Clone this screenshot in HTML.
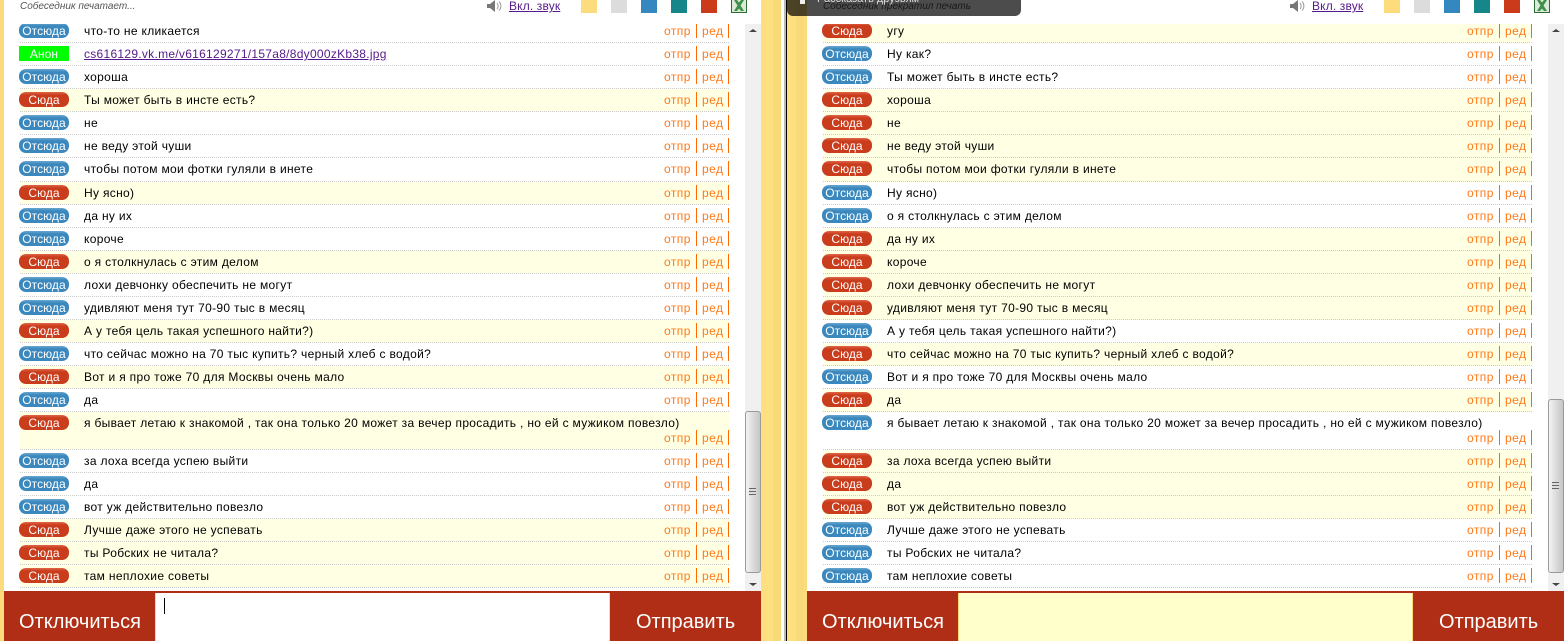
<!DOCTYPE html>
<html lang="ru">
<head>
<meta charset="utf-8">
<title>Чат</title>
<style>
html,body{margin:0;padding:0;width:1564px;height:641px;overflow:hidden;background:#fff}
body{position:relative;font-family:"Liberation Sans",sans-serif;font-size:12px;letter-spacing:.32px;color:#000}
.panel{position:absolute;top:0;left:0;width:761px;height:641px;background:#fff;overflow:hidden}
.panel.b{left:803px}
.edge{position:absolute;left:0;top:0;width:4px;height:641px;background:#fbdb7b}
.status{position:absolute;left:20px;top:1px;font-style:italic;font-size:10px;line-height:12px;color:#555;letter-spacing:0}
.spk{position:absolute;left:487px;top:0}
.snd{position:absolute;left:509px;top:0;line-height:12px;color:#551a8b;text-decoration:underline;font-size:12px;letter-spacing:.15px}
.sw{position:absolute;top:0;width:16px;height:13px}
.xl{position:absolute;left:731px;top:0}
.list{position:absolute;left:0;top:24px;width:745px;height:567px;overflow:hidden}
.in{margin-top:-4px}
.r{position:relative;margin-left:20px;width:709px;height:22px;border-bottom:1px dotted #ccc;background:#fff}
.r.y{background:#ffffe3}
.r.t{height:37px}
.r.x{height:23px}
.tag{position:absolute;left:-1px;top:3px;width:50px;height:15px;line-height:16px;border-radius:7px;text-align:center;color:#fff;font-size:12px;letter-spacing:.05px;background:linear-gradient(#6aa6cf 0,#3a88bd 3px,#3a88bd 100%)}
.tag.s{background:linear-gradient(#e0664a 0,#c93c1c 3px,#c93c1c 100%)}
.tag.g{background:#0f0;border-radius:0}
.m{position:absolute;left:64px;top:0;line-height:22px;white-space:nowrap}
.m a{color:#551a8b;text-decoration:underline;letter-spacing:.28px}
.o{position:absolute;top:0;line-height:22px;color:#ff7a1a;white-space:nowrap;letter-spacing:.45px}
.o1{left:644px}.o2{left:682px}
.l{position:absolute;top:3px;width:1px;height:15px;background:#ff6a00}
.l1{left:676px}.l2{left:708px}
.t .o{top:15px}
.t .l{top:18px}
.bar{position:absolute;left:745px;top:24px;width:16px;height:567px;background:#f0f0f0}
.up,.dn{position:absolute;left:4px;width:0;height:0;border-left:4px solid transparent;border-right:4px solid transparent}
.up{top:5px;border-bottom:3px solid #444}
.dn{bottom:5px;border-top:3px solid #444}
.th{position:absolute;left:0;width:14px;box-sizing:content-box;border:1px solid #9a9a9a;border-radius:3px;background:linear-gradient(90deg,#f4f4f4,#dedede 45%,#c6c6c6)}
.gr{position:absolute;left:3px;width:7px;height:8px;background:repeating-linear-gradient(#666 0,#666 1px,#ddd 1px,#ddd 3px)}
.foot{position:absolute;left:4px;top:591px;width:757px;height:50px;background:#b02e15}
.btn{position:absolute;top:18px;line-height:26px;color:#fff;font-family:"Liberation Sans",sans-serif;font-size:20px;letter-spacing:0;white-space:nowrap}
.inp{position:absolute;left:151px;top:2px;width:453px;height:48px;background:#fff;border-left:1px solid #fbdb7b;border-right:1px solid #fbdb7b}
.b .inp{background:#ffffcc}
.caret{position:absolute;left:8px;top:5px;width:1px;height:16px;background:#000}
.stripe{position:absolute;top:0;height:641px}
.toast{position:absolute;left:787px;top:0;width:234px;height:16px;background:rgba(0,0,0,.7);border-radius:0 0 6px 6px;overflow:hidden;color:#ddd}
.toast span{position:absolute;left:30px;top:-7px;line-height:12px;font-size:11px;letter-spacing:0;white-space:nowrap}
.toast i{position:absolute;left:13px;top:0;width:5px;height:4px;background:#eee}
</style>
</head>
<body>

<div class="panel a">
<div class="edge"></div>
<div class="status">Собеседник печатает...</div>
<svg class="spk" width="16" height="12" viewBox="0 0 16 12"><path d="M0 4h3l5-4v12L3 8H0z" fill="#777"/><path d="M10 3c1.500 1.500 1.500 4.500 0 6M12 1.500c2.500 2.500 2.500 6.500 0 9" fill="none" stroke="#999" stroke-width="1"/></svg>
<div class="snd">Вкл. звук</div>
<div class="sw" style="left:581px;background:#fcdc7c"></div>
<div class="sw" style="left:611px;background:#dcdcdc"></div>
<div class="sw" style="left:641px;background:#3587bf"></div>
<div class="sw" style="left:671px;background:#16868a"></div>
<div class="sw" style="left:701px;background:#cb3a1a"></div>
<svg class="xl" width="16" height="13" viewBox="0 0 16 13"><rect x=".5" y="-1" width="15" height="13.500" fill="#dbe9d8" stroke="#2f6b35"/><path d="M3 0h3l2 2.500L10 0h3L9.500 5.500 13 11h-3L8 8.500 6 11H3L6.500 5.500z" fill="#3d8f4a"/></svg>
<div class="list"><div class="in">
<div class="r"><div class="tag">Отсюда</div><div class="m">что-то не кликается</div><div class="o o1">отпр</div><div class="l l1"></div><div class="o o2">ред</div><div class="l l2"></div></div>
<div class="r"><div class="tag g">Анон</div><div class="m"><a>cs616129.vk.me/v616129271/157a8/8dy000zKb38.jpg</a></div><div class="o o1">отпр</div><div class="l l1"></div><div class="o o2">ред</div><div class="l l2"></div></div>
<div class="r"><div class="tag">Отсюда</div><div class="m">хороша</div><div class="o o1">отпр</div><div class="l l1"></div><div class="o o2">ред</div><div class="l l2"></div></div>
<div class="r y"><div class="tag s">Сюда</div><div class="m">Ты может быть в инсте есть?</div><div class="o o1">отпр</div><div class="l l1"></div><div class="o o2">ред</div><div class="l l2"></div></div>
<div class="r"><div class="tag">Отсюда</div><div class="m">не</div><div class="o o1">отпр</div><div class="l l1"></div><div class="o o2">ред</div><div class="l l2"></div></div>
<div class="r"><div class="tag">Отсюда</div><div class="m">не веду этой чуши</div><div class="o o1">отпр</div><div class="l l1"></div><div class="o o2">ред</div><div class="l l2"></div></div>
<div class="r x"><div class="tag">Отсюда</div><div class="m">чтобы потом мои фотки гуляли в инете</div><div class="o o1">отпр</div><div class="l l1"></div><div class="o o2">ред</div><div class="l l2"></div></div>
<div class="r y"><div class="tag s">Сюда</div><div class="m">Ну ясно)</div><div class="o o1">отпр</div><div class="l l1"></div><div class="o o2">ред</div><div class="l l2"></div></div>
<div class="r"><div class="tag">Отсюда</div><div class="m">да ну их</div><div class="o o1">отпр</div><div class="l l1"></div><div class="o o2">ред</div><div class="l l2"></div></div>
<div class="r"><div class="tag">Отсюда</div><div class="m">короче</div><div class="o o1">отпр</div><div class="l l1"></div><div class="o o2">ред</div><div class="l l2"></div></div>
<div class="r y"><div class="tag s">Сюда</div><div class="m">о я столкнулась с этим делом</div><div class="o o1">отпр</div><div class="l l1"></div><div class="o o2">ред</div><div class="l l2"></div></div>
<div class="r"><div class="tag">Отсюда</div><div class="m">лохи девчонку обеспечить не могут</div><div class="o o1">отпр</div><div class="l l1"></div><div class="o o2">ред</div><div class="l l2"></div></div>
<div class="r"><div class="tag">Отсюда</div><div class="m">удивляют меня тут 70-90 тыс в месяц</div><div class="o o1">отпр</div><div class="l l1"></div><div class="o o2">ред</div><div class="l l2"></div></div>
<div class="r y"><div class="tag s">Сюда</div><div class="m">А у тебя цель такая успешного найти?)</div><div class="o o1">отпр</div><div class="l l1"></div><div class="o o2">ред</div><div class="l l2"></div></div>
<div class="r"><div class="tag">Отсюда</div><div class="m">что сейчас можно на 70 тыс купить? черный хлеб с водой?</div><div class="o o1">отпр</div><div class="l l1"></div><div class="o o2">ред</div><div class="l l2"></div></div>
<div class="r y"><div class="tag s">Сюда</div><div class="m">Вот и я про тоже 70 для Москвы очень мало</div><div class="o o1">отпр</div><div class="l l1"></div><div class="o o2">ред</div><div class="l l2"></div></div>
<div class="r"><div class="tag">Отсюда</div><div class="m">да</div><div class="o o1">отпр</div><div class="l l1"></div><div class="o o2">ред</div><div class="l l2"></div></div>
<div class="r y t"><div class="tag s">Сюда</div><div class="m">я бывает летаю к знакомой , так она только 20 может за вечер просадить , но ей с мужиком повезло)</div><div class="o o1">отпр</div><div class="l l1"></div><div class="o o2">ред</div><div class="l l2"></div></div>
<div class="r"><div class="tag">Отсюда</div><div class="m">за лоха всегда успею выйти</div><div class="o o1">отпр</div><div class="l l1"></div><div class="o o2">ред</div><div class="l l2"></div></div>
<div class="r"><div class="tag">Отсюда</div><div class="m">да</div><div class="o o1">отпр</div><div class="l l1"></div><div class="o o2">ред</div><div class="l l2"></div></div>
<div class="r"><div class="tag">Отсюда</div><div class="m">вот уж действительно повезло</div><div class="o o1">отпр</div><div class="l l1"></div><div class="o o2">ред</div><div class="l l2"></div></div>
<div class="r y"><div class="tag s">Сюда</div><div class="m">Лучше даже этого не успевать</div><div class="o o1">отпр</div><div class="l l1"></div><div class="o o2">ред</div><div class="l l2"></div></div>
<div class="r y"><div class="tag s">Сюда</div><div class="m">ты Робских не читала?</div><div class="o o1">отпр</div><div class="l l1"></div><div class="o o2">ред</div><div class="l l2"></div></div>
<div class="r y"><div class="tag s">Сюда</div><div class="m">там неплохие советы</div><div class="o o1">отпр</div><div class="l l1"></div><div class="o o2">ред</div><div class="l l2"></div></div>
</div></div>
<div class="bar"><div class="up"></div><div class="th" style="top:387px;height:160px"><div class="gr" style="top:76px"></div></div><div class="dn"></div></div>
<div class="foot">
<div class="btn" style="left:15px">Отключиться</div>
<div class="inp"><div class="caret"></div></div>
<div class="btn" style="left:632px">Отправить</div>
</div>
</div>

<div class="stripe" style="left:761px;width:12px;background:#fee080"></div>
<div class="stripe" style="left:773px;width:8px;background:#f9da78"></div>
<div class="stripe" style="left:784px;width:2px;background:#bbb"></div>
<div class="stripe" style="left:786px;width:1px;background:#000"></div>
<div class="stripe" style="left:787px;width:9px;background:#fee080"></div>
<div class="stripe" style="left:796px;width:7px;background:#f9da78"></div>

<div class="panel b">
<div class="edge"></div>
<div class="status">Собеседник прекратил печать</div>
<svg class="spk" width="16" height="12" viewBox="0 0 16 12"><path d="M0 4h3l5-4v12L3 8H0z" fill="#777"/><path d="M10 3c1.500 1.500 1.500 4.500 0 6M12 1.500c2.500 2.500 2.500 6.500 0 9" fill="none" stroke="#999" stroke-width="1"/></svg>
<div class="snd">Вкл. звук</div>
<div class="sw" style="left:581px;background:#fcdc7c"></div>
<div class="sw" style="left:611px;background:#dcdcdc"></div>
<div class="sw" style="left:641px;background:#3587bf"></div>
<div class="sw" style="left:671px;background:#16868a"></div>
<div class="sw" style="left:701px;background:#cb3a1a"></div>
<svg class="xl" width="16" height="13" viewBox="0 0 16 13"><rect x=".5" y="-1" width="15" height="13.500" fill="#dbe9d8" stroke="#2f6b35"/><path d="M3 0h3l2 2.500L10 0h3L9.500 5.500 13 11h-3L8 8.500 6 11H3L6.500 5.500z" fill="#3d8f4a"/></svg>
<div class="list"><div class="in">
<div class="r y"><div class="tag s">Сюда</div><div class="m">угу</div><div class="o o1">отпр</div><div class="l l1"></div><div class="o o2">ред</div><div class="l l2"></div></div>
<div class="r"><div class="tag">Отсюда</div><div class="m">Ну как?</div><div class="o o1">отпр</div><div class="l l1"></div><div class="o o2">ред</div><div class="l l2"></div></div>
<div class="r"><div class="tag">Отсюда</div><div class="m">Ты может быть в инсте есть?</div><div class="o o1">отпр</div><div class="l l1"></div><div class="o o2">ред</div><div class="l l2"></div></div>
<div class="r y"><div class="tag s">Сюда</div><div class="m">хороша</div><div class="o o1">отпр</div><div class="l l1"></div><div class="o o2">ред</div><div class="l l2"></div></div>
<div class="r y"><div class="tag s">Сюда</div><div class="m">не</div><div class="o o1">отпр</div><div class="l l1"></div><div class="o o2">ред</div><div class="l l2"></div></div>
<div class="r y"><div class="tag s">Сюда</div><div class="m">не веду этой чуши</div><div class="o o1">отпр</div><div class="l l1"></div><div class="o o2">ред</div><div class="l l2"></div></div>
<div class="r y x"><div class="tag s">Сюда</div><div class="m">чтобы потом мои фотки гуляли в инете</div><div class="o o1">отпр</div><div class="l l1"></div><div class="o o2">ред</div><div class="l l2"></div></div>
<div class="r"><div class="tag">Отсюда</div><div class="m">Ну ясно)</div><div class="o o1">отпр</div><div class="l l1"></div><div class="o o2">ред</div><div class="l l2"></div></div>
<div class="r"><div class="tag">Отсюда</div><div class="m">о я столкнулась с этим делом</div><div class="o o1">отпр</div><div class="l l1"></div><div class="o o2">ред</div><div class="l l2"></div></div>
<div class="r y"><div class="tag s">Сюда</div><div class="m">да ну их</div><div class="o o1">отпр</div><div class="l l1"></div><div class="o o2">ред</div><div class="l l2"></div></div>
<div class="r y"><div class="tag s">Сюда</div><div class="m">короче</div><div class="o o1">отпр</div><div class="l l1"></div><div class="o o2">ред</div><div class="l l2"></div></div>
<div class="r y"><div class="tag s">Сюда</div><div class="m">лохи девчонку обеспечить не могут</div><div class="o o1">отпр</div><div class="l l1"></div><div class="o o2">ред</div><div class="l l2"></div></div>
<div class="r y"><div class="tag s">Сюда</div><div class="m">удивляют меня тут 70-90 тыс в месяц</div><div class="o o1">отпр</div><div class="l l1"></div><div class="o o2">ред</div><div class="l l2"></div></div>
<div class="r"><div class="tag">Отсюда</div><div class="m">А у тебя цель такая успешного найти?)</div><div class="o o1">отпр</div><div class="l l1"></div><div class="o o2">ред</div><div class="l l2"></div></div>
<div class="r y"><div class="tag s">Сюда</div><div class="m">что сейчас можно на 70 тыс купить? черный хлеб с водой?</div><div class="o o1">отпр</div><div class="l l1"></div><div class="o o2">ред</div><div class="l l2"></div></div>
<div class="r"><div class="tag">Отсюда</div><div class="m">Вот и я про тоже 70 для Москвы очень мало</div><div class="o o1">отпр</div><div class="l l1"></div><div class="o o2">ред</div><div class="l l2"></div></div>
<div class="r y"><div class="tag s">Сюда</div><div class="m">да</div><div class="o o1">отпр</div><div class="l l1"></div><div class="o o2">ред</div><div class="l l2"></div></div>
<div class="r t"><div class="tag">Отсюда</div><div class="m">я бывает летаю к знакомой , так она только 20 может за вечер просадить , но ей с мужиком повезло)</div><div class="o o1">отпр</div><div class="l l1"></div><div class="o o2">ред</div><div class="l l2"></div></div>
<div class="r y"><div class="tag s">Сюда</div><div class="m">за лоха всегда успею выйти</div><div class="o o1">отпр</div><div class="l l1"></div><div class="o o2">ред</div><div class="l l2"></div></div>
<div class="r y"><div class="tag s">Сюда</div><div class="m">да</div><div class="o o1">отпр</div><div class="l l1"></div><div class="o o2">ред</div><div class="l l2"></div></div>
<div class="r y"><div class="tag s">Сюда</div><div class="m">вот уж действительно повезло</div><div class="o o1">отпр</div><div class="l l1"></div><div class="o o2">ред</div><div class="l l2"></div></div>
<div class="r"><div class="tag">Отсюда</div><div class="m">Лучше даже этого не успевать</div><div class="o o1">отпр</div><div class="l l1"></div><div class="o o2">ред</div><div class="l l2"></div></div>
<div class="r"><div class="tag">Отсюда</div><div class="m">ты Робских не читала?</div><div class="o o1">отпр</div><div class="l l1"></div><div class="o o2">ред</div><div class="l l2"></div></div>
<div class="r"><div class="tag">Отсюда</div><div class="m">там неплохие советы</div><div class="o o1">отпр</div><div class="l l1"></div><div class="o o2">ред</div><div class="l l2"></div></div>
</div></div>
<div class="bar"><div class="up"></div><div class="th" style="top:375px;height:172px"><div class="gr" style="top:82px"></div></div><div class="dn"></div></div>
<div class="foot">
<div class="btn" style="left:15px">Отключиться</div>
<div class="inp"></div>
<div class="btn" style="left:632px">Отправить</div>
</div>
</div>

<div class="toast"><i></i><span>Рассказать друзьям</span></div>
</body>
</html>
